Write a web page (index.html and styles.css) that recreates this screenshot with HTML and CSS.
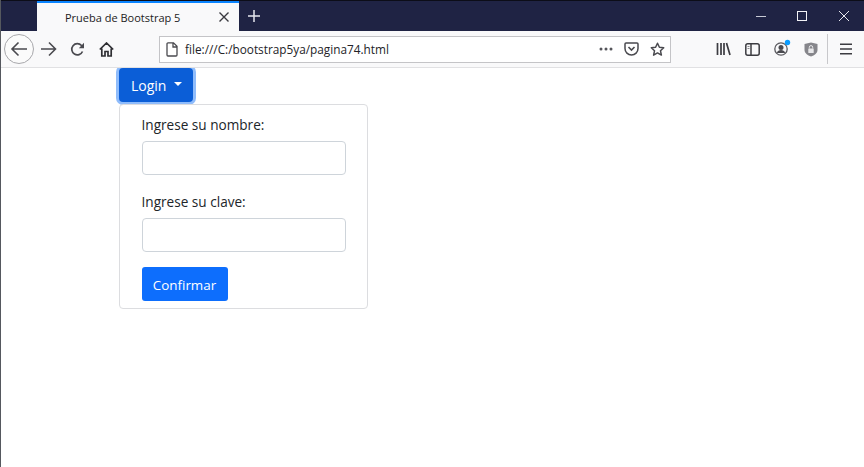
FILE: index.html
```html
<!DOCTYPE html>
<html lang="es">
<head>
<meta charset="utf-8">
<title>Prueba de Bootstrap 5</title>
<link rel="stylesheet" href="styles.css">
</head>
<body>
<header class="tabstrip">
  <div class="tab">
    <span class="tab-title">Prueba de Bootstrap 5</span>
    <svg class="tab-close" width="12" height="12" viewBox="0 0 12 12"><path d="M1.5 1.5l9 9M10.5 1.5l-9 9" stroke="#3a3a40" stroke-width="1.4" fill="none"/></svg>
  </div>
  <svg class="new-tab" width="14" height="14" viewBox="0 0 14 14"><path d="M7 1v12M1 7h12" stroke="#e6e7ee" stroke-width="1.5" fill="none"/></svg>
  <div class="win-controls">
    <span class="win-btn"><svg width="12" height="12" viewBox="0 0 12 12"><path d="M1 6.5h10" stroke="#c8cad6" stroke-width="1" fill="none"/></svg></span>
    <span class="win-btn"><svg width="12" height="12" viewBox="0 0 12 12"><rect x="1.5" y="1.5" width="9" height="9" stroke="#f2f2f6" stroke-width="1" fill="none"/></svg></span>
    <span class="win-btn win-close"><svg width="12" height="12" viewBox="0 0 12 12"><path d="M1 1l10 10M11 1L1 11" stroke="#e6e7ee" stroke-width="1" fill="none"/></svg></span>
  </div>
</header>
<nav class="navbar">
  <span class="back"><svg width="18" height="16" viewBox="0 0 18 16"><path d="M17 8H2M8.5 1.5L2 8l6.500 6.500" stroke="#4a4a4f" stroke-width="1.6" fill="none"/></svg></span>
  <span class="slot"><svg width="17" height="16" viewBox="0 0 17 16"><path d="M1 8h14M9 1.500L15.500 8 9 14.500" stroke="#4a4a4f" stroke-width="1.6" fill="none"/></svg></span>
  <span class="slot"><svg width="15" height="15" viewBox="0 0 15 15"><path d="M12.500 9.500A5.600 5.600 0 1 1 11.500 3.500L13 5" stroke="#4a4a4f" stroke-width="1.700" fill="none"/><path d="M14 .8V6.200H8.800z" fill="#4a4a4f"/></svg></span>
  <span class="slot"><svg width="15" height="15" viewBox="0 0 15 15"><path d="M.8 7.500L7.500 1l6.700 6.500M2.800 6.500V14h3.200V9.500h3V14h3.200V6.500" stroke="#2f2f33" stroke-width="1.700" fill="none"/></svg></span>
  <div class="urlbar">
    <svg class="page-icon" width="12" height="15" viewBox="0 0 12 15"><path d="M1 1.800a1 1 0 0 1 1-1h5.500L11 4.300V13a1 1 0 0 1-1 1H2a1 1 0 0 1-1-1zM7 1v4h4" stroke="#4a4a4f" stroke-width="1.300" fill="none"/></svg>
    <span class="url">file:///C:/bootstrap5ya/pagina74.html</span>
    <svg class="dots" width="14" height="4" viewBox="0 0 14 4"><circle cx="2" cy="2" r="1.500" fill="#55555a"/><circle cx="7" cy="2" r="1.500" fill="#55555a"/><circle cx="12" cy="2" r="1.500" fill="#55555a"/></svg>
    <svg class="pocket" width="15" height="14" viewBox="0 0 15 14"><path d="M1 2a1 1 0 0 1 1-1h11a1 1 0 0 1 1 1v4.500a6.500 6.500 0 0 1-13 0z" stroke="#4a4a4f" stroke-width="1.500" fill="none"/><path d="M4.500 5l3 3 3-3" stroke="#4a4a4f" stroke-width="1.600" fill="none"/></svg>
    <svg class="star" width="15" height="15" viewBox="0 0 15 15"><path d="M7.500 1.300l1.900 4 4.300.5-3.200 3 .9 4.300-3.900-2.200-3.900 2.200.9-4.300-3.200-3 4.300-.5z" stroke="#4a4a4f" stroke-width="1.500" fill="none" stroke-linejoin="round"/></svg>
  </div>
  <div class="tools">
    <span class="slot"><svg width="15" height="14" viewBox="0 0 15 14"><path d="M1.500 1v12M5 1v12M8 1v12M10.500 1l3.500 12" stroke="#3c3c41" stroke-width="1.700" fill="none"/></svg></span>
    <span class="slot"><svg width="15" height="13" viewBox="0 0 15 13"><rect x=".8" y=".8" width="13.400" height="11.400" rx="2" stroke="#3c3c41" stroke-width="1.500" fill="none"/><path d="M6 1v11" stroke="#3c3c41" stroke-width="1.500"/><path d="M2.500 3.500h2M2.500 5.500h2" stroke="#8a8a8f" stroke-width="1"/></svg></span>
    <span class="slot profile"><svg width="18" height="18" viewBox="0 0 18 18"><circle cx="8" cy="10" r="6.200" stroke="#5a5a5f" stroke-width="1.300" fill="none"/><circle cx="8" cy="8.500" r="2.500" fill="#4a4a4f"/><path d="M3.800 14a4.500 4.500 0 0 1 8.400 0z" fill="#4a4a4f"/><circle cx="14.500" cy="3.500" r="2.700" fill="#0a9dff"/></svg></span>
    <span class="slot"><svg width="14" height="15" viewBox="0 0 14 15"><path d="M7 .5L13.500 2v6c0 3-3 5.500-6.500 6.500C3.500 13.500.5 11 .5 8V2z" fill="#86868b"/><rect x="4.300" y="6.500" width="5.400" height="4.500" rx=".5" fill="#e8e8ea"/><path d="M5.300 6.500V5.300a1.700 1.700 0 0 1 3.400 0v1.200" stroke="#e8e8ea" stroke-width="1" fill="none"/></svg></span>
  </div>
  <span class="divider"></span>
  <span class="menu"><svg width="14" height="12" viewBox="0 0 14 12"><path d="M1 1.200h12M1 6h12M1 10.800h12" stroke="#3c3c41" stroke-width="1.600" fill="none"/></svg></span>
</nav>
<main class="page">
  <button class="login" type="button">Login<span class="caret"></span></button>
  <form class="card">
    <div class="field">
      <label class="label" for="nombre">Ingrese su nombre:</label>
      <input class="input" id="nombre" type="text">
    </div>
    <div class="field">
      <label class="label" for="clave">Ingrese su clave:</label>
      <input class="input" id="clave" type="password">
    </div>
    <button class="submit" type="button">Confirmar</button>
  </form>
</main>
</body>
</html>
```
FILE: styles.css
```css
* { box-sizing: border-box; }
html, body { margin: 0; height: 100%; }
body {
  width: 864px;
  height: 467px;
  overflow: hidden;
  background: #fff;
  border-left: 1px solid #55585e;
  font-family: "Open Sans", "Liberation Sans", sans-serif;
  display: flex;
  flex-direction: column;
}
svg { display: block; }

.tabstrip {
  height: 31px;
  flex: none;
  display: flex;
  align-items: stretch;
  background: #1f2344;
  border-top: 1px solid #0c0d18;
  padding-left: 36px;
}
.tab {
  width: 202px;
  background: #f9f9fa;
  border-top: 2px solid #0a84ff;
  display: flex;
  align-items: center;
  padding: 0 9px 0 28px;
  justify-content: space-between;
}
.tab-title {
  font-size: 11px;
  color: #1c1b22;
  white-space: nowrap;
}
.new-tab { align-self: center; margin-left: 8px; }
.win-controls { margin-left: auto; display: flex; align-items: center; }
.win-btn { width: 41px; display: flex; justify-content: center; }
.win-close { width: 42px; padding-left: 1px; }

.navbar {
  position: relative;
  z-index: 1;
  height: 37px;
  flex: none;
  display: flex;
  align-items: center;
  background: #f9f9fa;
  border-bottom: 1px solid #e1e1e3;
  padding-left: 3px;
}
.back {
  width: 30px;
  height: 30px;
  border: 1px solid #a8a8ac;
  border-radius: 50%;
  background: #fbfbfb;
  display: flex;
  align-items: center;
  justify-content: center;
}
.slot {
  width: 29px;
  display: flex;
  align-items: center;
  justify-content: center;
}
.urlbar {
  margin-left: 38px;
  width: 512px;
  height: 27px;
  background: #fff;
  border: 1px solid #c4c4c7;
  display: flex;
  align-items: center;
  padding-left: 6px;
}
.url {
  margin-left: 7px;
  font-size: 11.800px;
  color: #232327;
  white-space: nowrap;
}
.dots { margin-left: auto; }
.pocket { margin-left: 11px; }
.star { margin: 0 5px 0 11px; }
.tools { margin-left: 38px; display: flex; align-items: center; }
.profile { padding-bottom: 3px; }
.divider { width: 1px; height: 30px; background: #c8c8cb; margin-left: 2px; }
.menu { margin-left: 11px; }

.page {
  flex: 1;
  padding-left: 118px;
  display: flex;
  flex-direction: column;
  align-items: flex-start;
}
.login {
  width: 74px;
  height: 34px;
  padding: 0 0 0 12px;
  border: 0;
  border-radius: 4px;
  background: #0b5ed7;
  color: #fff;
  font: 14px "Open Sans", "Liberation Sans", sans-serif;
  box-shadow: 0 0 0 3px #8fbcfb;
  display: flex;
  align-items: center;
}
.caret {
  margin-left: 8px;
  margin-bottom: 2px;
  border-top: 4px solid #fff;
  border-left: 4px solid transparent;
  border-right: 4px solid transparent;
}
.card {
  margin-top: 2px;
  width: 249px;
  height: 205px;
  border: 1px solid #dcdde0;
  border-radius: 4px;
  padding: 8px 21.500px 7px;
  display: flex;
  flex-direction: column;
}
.field { margin-bottom: 15px; }
.label {
  display: block;
  height: 24px;
  line-height: 24px;
  margin-bottom: 4px;
  font-size: 13.600px;
  color: #212529;
}
.input {
  display: block;
  width: 204px;
  height: 34px;
  border: 1px solid #ced4da;
  border-radius: 4px;
  background: #fff;
}
.submit {
  align-self: flex-start;
  width: 86px;
  height: 34px;
  padding: 2px 0 0;
  border: 0;
  border-radius: 3px;
  background: #0d6efd;
  color: #fff;
  font: 13.400px "Open Sans", "Liberation Sans", sans-serif;
}
```
